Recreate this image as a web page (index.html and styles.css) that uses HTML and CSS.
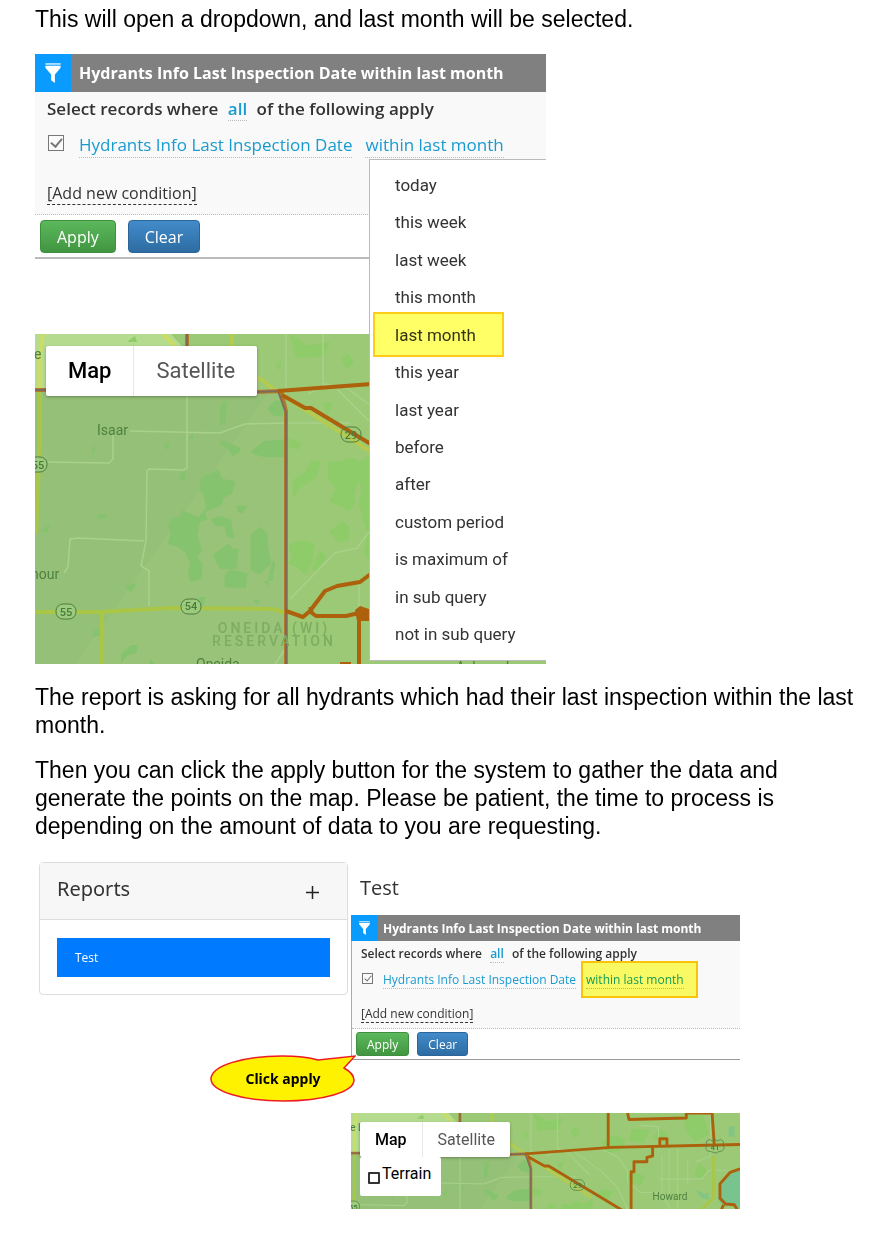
FILE: index.html
```
<!DOCTYPE html>
<html lang="en">
<head>
    <meta charset="UTF-8">
    <meta name="viewport" content="width=device-width, initial-scale=1.0">
    <title>Hydrant report guide</title>
    <link rel="stylesheet" href="styles.css">
</head>
<body>
    <!-- Shared drawings -->
    <svg class="defs" width="0" height="0" aria-hidden="true">
        <symbol id="funnel" viewBox="0 0 18 21">
            <path d="M1 0h16v2H1z" fill="#a9dcff"/>
            <path d="M1 3h16v2l-6 7v9l-4-3v-6L1 5z" fill="#fff"/>
        </symbol>
        <symbol id="map" viewBox="0 0 543 330">
            <rect width="543" height="330" fill="#9bc975"/>
            <path d="M0 0h136l25 28-60 42H0z" fill="#b5dc8e"/>
            <path d="M0 57h245l6 20v253H0z" fill="#98c379"/>
            <path d="M0 57h235L40 330H0z" fill="#95c077"/>
            <!-- woods -->
            <g fill="#86c36e" transform="translate(145 66) scale(0.3333)">
                <path d="M64 234l52-26 10 28 40 8-10 38-26 12-4 20-50 22 6 22-22 8-8 40 14 44-14 22 16 22-4 44-34 8-6-30 8-22-14-34-26-20-28-8 8-40-10-14 12-22 26-6 6-20 50 22 22-30-8-42-12-6z"/>
                <path d="M94 356l30-8 30 12 8 54-20-2-8-32-30-4-8-12zM100 464l46-34 10 14 20 4-6 60-50-2-14-22zM134 526l14-18 54 12-4 44-64-2zM212 404l28-24 22 22 2 40 10 48-36 34-26-14zM280 478l6 12-8 50-14 2 8-40zM250 544l18-2-4 16z"/>
                <path d="M120 124l14-2 46 22 2 10-24 16-12-22-26-16zM214 154l36-30 66-6v54h-62l-36-10zM170 316l32 2-14 22-16-4zM0 224l18-14-4 28-14 6zM26 116l14-20-2 24zM262 26l24-26 30 10-8 40-30-4zM122 10l20-8-6 66-16 10zM56 592l20-2-6 28-14-2zM218 600l24 2-14 10z"/>
            </g>
            <g fill="#86c36e">
                <path d="M128 112l7-5-2 9zM90 252l12-3-6 10zM63 180h8v5h-8zM6 196l10-6-4 9zM57 118l2-10 1 12zM58 296l6-2 1 7-7 2zM86 320l10-9h6v7l-10 4-6 7zM116 325l4 5h-6z"/>
            </g>
            <g fill="#8dcc68">
                <path d="M92 8l8-6 2 6zM240 32l6-6-1 10zM307 25l6-6 6 10-8 6zM288 70l10-2-6 12zM255 0l18 12 22-4-6 14-28 2z"/>
                <path transform="translate(145 66) scale(0.3333)" d="M326 114l36 14-4 20-32-6zM340 240l36-24 20-36 28 6-14 44-50 34-22 30zM446 186l40-2 20-12 30 8 2 60-16 40 4 30-18 24-60-32 20-34-24-30zM326 434l40-14 38 12-8 60-20 32-24-22-26-12 10-20zM448 396l40-32 20 18-2 38-30 6zM532 190l44-30v330l-24-30 10-60-26-90 8-40zM420 450l20 20-34 44-10-8z"/>
                <path d="M350 40l20-10 14 8-8 14-20 4zM390 82l20 6-6 14-20-8zM430 22l12 6-6 14-14-8zM485 70l12 10-10 14-8-8zM352 106l14 4-10 14-14-10zM468 0l24 4 8 26-20 10-14-18zM392 22l24 2-8 18-20-4z"/>
            </g>
            <g fill="#78c38e">
                <path d="M543 80l-15 5-13 18-3 16 7 12 14-2 10 8z"/>
                <path d="M527 20l8-3v16h-8zM480 107l14 6 4-2 2 10-10-2z" opacity="0.7"/>
            </g>
            <!-- small roads -->
            <g fill="none" stroke="#a9d18a" stroke-width="1.5">
                <path d="M152 62v72l-3 2-35-1-2 2-1 70-5 25 8 5v35M95 97l90 2 25-9 45-1h60M78 100v25l-4 4-61-1M109 207l-66-3-8 1-2 28-4 6M251 0v60M288 0v50l12 3 34 34M255 265l45-46 22-5 12-16M324 250v28M273 60l20-10M240 330l15-22"/>
                <path d="M347 50l25 11 14 20v14l18 16h26M288 50l24 4 40 30 20 20 14 30M430 55l-1-36-27-2M444 50v64h-20M456 48v86M430 92h60l10-12h30M470 66v34"/>
                <path d="M434 60v54l12 20M502 0v60l-20 8"/>
            </g>
            <!-- highways -->
            <g fill="none" stroke="#a9c647" stroke-width="4">
                <path d="M0 278h65l70-4 103 1 13 4M67 279v51"/>
                <path d="M197 0v16M221 42l25 18 90 58" stroke="#b4cb50"/>
                <path d="M8 0L5 20v37M128 0l12 12" stroke="#cbdc67"/>
                <path d="M5 57v43L1 200"/>
                <path d="M506 60v58l-12 12-14 14"/>
            </g>
            <path d="M0 56h14M221 58l25-1 5 20v253M152 0v14" fill="none" stroke="#b27a2a" stroke-width="4"/>
            <path d="M0 56h14M221 58l22-1 8 22v251M152 0v14" fill="none" stroke="#806a5c" stroke-width="2"/>
            <!-- district borders -->
            <g fill="none" stroke="#ad610c" stroke-width="4" stroke-linejoin="round">
                <path d="M243 57l120-9 180-4M247 61l23 13 6 0 58 35 50 30"/>
                <path d="M251 277l17 6 7-6 15-20 12-5 23-4 12-9M275 273l2 6 4 3h30l13-3v51"/>
                <path d="M359 0v48M386 0l2 9 80-2V0h36l3 44M421 46v14l-8 2v6h-18v14h-4v60M431 45v-9h10v9"/>
                <path d="M543 78l-14 5-14 16 0 20 8 8 12 1 7 12M520 128l-5 12 10 6"/>
            </g>
            <path d="M320 276l5-4 9 3v12h-12zM305 328h11v2h-11z" fill="#ad610c"/>
            <!-- shields -->
            <g fill="#9bcb7d" stroke="#517b3f" stroke-width="1">
                <rect x="-8" y="123" width="20" height="15" rx="7"/>
                <rect x="306" y="93" width="20" height="15" rx="7" fill="none"/>
                <rect x="21" y="270" width="20" height="15" rx="7"/>
                <rect x="146" y="265" width="20" height="15" rx="7"/>
                <path d="M496 40l4-3 5 2 3-2 3 2 5-2 4 3-1 5q4 4-1 8-6 1-9 3-5-2-11-3-5-3-1-8z" fill="none"/>
            </g>
            <g class="map-number">
                <text x="3" y="135">55</text>
                <text x="316" y="105">29</text>
                <text x="31" y="282">55</text>
                <text x="156" y="276">54</text>
                <text x="508" y="51">41</text>
            </g>
            <g class="map-town">
                <text x="-1" y="25">e L</text>
                <text x="62" y="101">Isaar</text>
                <text x="-4" y="245">nour</text>
                <text x="161" y="335">Oneida</text>
                <text x="421" y="122">Howard</text>
                <text x="421" y="338">Ashwaubenon</text>
            </g>
            <g class="map-region">
                <text x="239" y="299">ONEIDA (WI)</text>
                <text x="239" y="312">RESERVATION</text>
            </g>
        </symbol>
    </svg>

    <main class="page">
        <p>This will open a dropdown, and last month will be selected.</p>

        <section class="screen">
            <div class="filter">
                <div class="filter-header">
                    <span class="filter-icon"><svg><use href="#funnel"/></svg></span>
                    <h2>Hydrants Info Last Inspection Date within last month</h2>
                </div>
                <div class="filter-body">
                    <div class="filter-rule">Select records where <a href="#" class="term">all</a> of the following apply</div>
                    <div class="condition">
                        <input type="checkbox" aria-label="Use condition" checked>
                        <a href="#" class="term">Hydrants Info Last Inspection Date</a>
                        <a href="#" class="term">within last month</a>
                    </div>
                    <div class="filter-add"><a href="#">[Add new condition]</a></div>
                </div>
                <div class="filter-actions">
                    <button class="btn btn-apply">Apply</button>
                    <button class="btn btn-clear">Clear</button>
                </div>
            </div>
            <div class="map">
                <svg class="map-art" viewBox="0 0 543 330" preserveAspectRatio="xMinYMin slice"><use href="#map"/></svg>
                <div class="map-types">
                    <button class="active">Map</button>
                    <button>Satellite</button>
                </div>
            </div>
            <ul class="menu">
                <li><button>today</button></li>
                <li><button>this week</button></li>
                <li><button>last week</button></li>
                <li><button>this month</button></li>
                <li class="marked"><button>last month</button></li>
                <li><button>this year</button></li>
                <li><button>last year</button></li>
                <li><button>before</button></li>
                <li><button>after</button></li>
                <li><button>custom period</button></li>
                <li><button>is maximum of</button></li>
                <li><button>in sub query</button></li>
                <li><button>not in sub query</button></li>
            </ul>
        </section>

        <p>The report is asking for all hydrants which had their last inspection within the last month.</p>
        <p>Then you can click the apply button for the system to gather the data and generate the points on the map. Please be patient, the time to process is depending on the amount of data to you are requesting.</p>

        <section class="workspace">
            <aside class="reports">
                <header>
                    <h2>Reports</h2>
                    <button class="add" aria-label="Add report">
                        <svg width="13" height="13" viewBox="0 0 13 13"><path d="M0 6.5h13M6.5 0v13" stroke="#222" stroke-width="1.5"/></svg>
                    </button>
                </header>
                <div class="report-list">
                    <a href="#">Test</a>
                </div>
            </aside>
            <div class="report">
                <h2 class="report-title">Test</h2>
                <div class="filter filter-small">
                    <div class="filter-header">
                        <span class="filter-icon"><svg><use href="#funnel"/></svg></span>
                        <h2>Hydrants Info Last Inspection Date within last month</h2>
                    </div>
                    <div class="filter-body">
                        <div class="filter-rule">Select records where <a href="#" class="term">all</a> of the following apply</div>
                        <div class="condition">
                            <input type="checkbox" aria-label="Use condition" checked>
                            <a href="#" class="term">Hydrants Info Last Inspection Date</a>
                            <span class="marked"><a href="#" class="term">within last month</a></span>
                        </div>
                        <div class="filter-add"><a href="#">[Add new condition]</a></div>
                    </div>
                    <div class="filter-actions">
                        <button class="btn btn-apply">Apply</button>
                        <button class="btn btn-clear">Clear</button>
                    </div>
                </div>
                <div class="map map-small">
                    <svg class="map-art" viewBox="0 0 543 134" preserveAspectRatio="xMinYMin slice"><svg width="543" height="330"><use href="#map"/></svg></svg>
                    <div class="map-types">
                        <button class="active">Map</button>
                        <button>Satellite</button>
                    </div>
                    <label class="terrain"><input type="checkbox">Terrain</label>
                </div>
                <div class="callout">
                    <svg width="146" height="48" viewBox="0 0 146 48">
                        <path d="M108 5L145 1L134 13C141 17 144 20 144 25C144 37 113 46 73 46C32 46 1 36 1 24C1 11 32 1 72 1C86 1 98 2 108 5Z" fill="#fff200" stroke="#ed1c24" stroke-width="1.5"/>
                    </svg>
                    <span>Click apply</span>
                </div>
            </div>
        </section>
    </main>
</body>
</html>
```
FILE: styles.css
```
* {
    box-sizing: border-box;
}

body {
    margin: 0;
    background: #fff;
    color: #000;
    font-family: "Liberation Sans", Arial, sans-serif;
}

h2, p, ul {
    margin: 0;
    padding: 0;
}

a {
    color: inherit;
    text-decoration: none;
}

button {
    font: inherit;
    border: 0;
    background: none;
    padding: 0;
    cursor: pointer;
}

.defs {
    position: absolute;
}

.page {
    padding: 5px 35px 36px;
    font-size: 23px;
    line-height: 28px;
}

.page > p + p {
    margin-top: 17px;
}

/* Filter panel */
.screen {
    position: relative;
    max-width: 511px;
    margin: 21px 0 19px;
    overflow: hidden;
}

.filter {
    font-family: "Open Sans", "Noto Sans", sans-serif;
    font-size: 17px;
    line-height: 24px;
    color: #333;
    border-bottom: 2px solid #bbb;
}

.filter-header {
    display: flex;
    align-items: center;
    height: 38px;
    background: #808080;
    color: #fff;
    white-space: nowrap;
}

.filter-header h2 {
    margin-left: 8px;
    font-size: 16px;
    font-weight: 700;
}

.filter-icon {
    display: flex;
    align-items: center;
    justify-content: center;
    width: 36px;
    height: 100%;
    background: #0a9bff;
}

.filter-icon svg {
    width: 18px;
    height: 20px;
}

.filter-body {
    padding: 5px 12px 9px;
    background: #f9f9f9;
    border-bottom: 1px dotted #bbb;
    white-space: nowrap;
}

.filter-rule {
    font-weight: 600;
}

.term {
    color: #189bd1;
    border-bottom: 1px dotted #bbb;
}

.filter-rule .term {
    margin: 0 5px;
}

.condition {
    display: flex;
    align-items: center;
    gap: 13px;
    height: 24px;
    margin: 12px 0 24px;
}

.condition input {
    appearance: none;
    flex: none;
    width: 16px;
    height: 16px;
    margin: 0 2px 4px 1px;
    border: 1px solid #777;
    background: #fafafa;
    display: grid;
    place-items: center;
}

.condition input:checked::before {
    content: "";
    width: 5px;
    height: 9px;
    margin-bottom: 3px;
    border: solid #777;
    border-width: 0 2px 2px 0;
    transform: rotate(40deg);
}

.filter-add {
    font-size: 16px;
    font-weight: 500;
}

.filter-add a {
    border-bottom: 1px dashed #333;
}

.filter-actions {
    display: flex;
    gap: 12px;
    padding: 5px 5px 4px;
    font-size: 16px;
}

.btn {
    height: 33px;
    padding: 0 16px;
    border: 1px solid;
    border-radius: 4px;
    color: #fff;
}

.btn-apply {
    background: linear-gradient(#5cb85c, #419641);
    border-color: #3e8f3e;
}

.btn-clear {
    background: linear-gradient(#428bca, #2d6ca2);
    border-color: #2b669a;
}

/* Map */
.map {
    position: relative;
    height: 330px;
    margin-top: 75px;
    padding: 12px 11px;
    overflow: hidden;
    font-family: Roboto, sans-serif;
}

.map-art {
    position: absolute;
    top: 0;
    left: 0;
    width: auto;
    height: 100%;
}

.map-number {
    font: 500 11px Roboto, sans-serif;
    fill: #4a7a3a;
    text-anchor: middle;
}

.map-town {
    font: 14px Roboto, sans-serif;
    fill: #4f8040;
}

.map-region {
    font: 500 14px Roboto, sans-serif;
    letter-spacing: 3px;
    fill: #7eac61;
    text-anchor: middle;
}

.map-types {
    position: relative;
    display: flex;
    width: max-content;
    background: #fff;
    border-radius: 2px;
    box-shadow: 0 1px 3px rgba(0, 0, 0, 0.3);
}

.map-types button {
    height: 50px;
    padding: 0 22px;
    font-size: 22px;
    color: #565656;
}

.map-types .active {
    color: #000;
    font-weight: 500;
    border-right: 1px solid #e6e6e6;
}

/* Dropdown */
.menu {
    position: absolute;
    top: 105px;
    right: -1px;
    bottom: 3px;
    width: 178px;
    display: flex;
    flex-direction: column;
    padding: 6px 0 7px;
    list-style: none;
    background: #fff;
    border: 1px solid #bbb;
    font-family: Roboto, sans-serif;
    font-size: 17px;
}

.menu li {
    position: relative;
    flex: 1;
    display: flex;
}

.menu button {
    flex: 1;
    padding-left: 25px;
    text-align: left;
    color: #333;
}

.marked {
    position: relative;
}

.marked::after {
    content: "";
    position: absolute;
    inset: -4px 42px -4px 3px;
    border: 2px solid #ffcc1a;
    background: #ffff66;
    mix-blend-mode: multiply;
    pointer-events: none;
}

/* Reports workspace */
.workspace {
    display: grid;
    grid-template-columns: 309fr 389fr;
    align-items: start;
    gap: 3px;
    max-width: 705px;
    margin-top: 22px;
    padding-left: 4px;
}

.reports {
    border: 1px solid #ddd;
    border-radius: 4px;
    color: #333;
}

.reports header {
    display: flex;
    align-items: center;
    justify-content: space-between;
    height: 57px;
    padding: 0 28px 4px 17px;
    background: #f7f7f7;
    border-bottom: 1px solid #ddd;
}

.reports h2 {
    font: 400 20px/28px "Noto Sans", sans-serif;
}

.add {
    display: flex;
    margin-top: 6px;
}

.report-list {
    padding: 18px 17px 17px;
}

.report-list a {
    display: block;
    padding-left: 18px;
    background: #007bff;
    color: #fff;
    font: 12px/39px "Open Sans", sans-serif;
}

.report {
    position: relative;
    min-width: 0;
}

.report-title {
    padding: 12px 9px 13px;
    font: 400 20px/28px "Open Sans", sans-serif;
    color: #333;
}

.filter-small {
    font-size: 12px;
    line-height: 17px;
    border-left: 1px solid #aaa;
    border-bottom: 1px solid #999;
}

.filter-small .filter-header {
    height: 26px;
    margin-left: -1px;
}

.filter-small .filter-header h2 {
    margin-left: 5px;
    font-size: 12px;
}

.filter-small .filter-icon {
    width: 27px;
}

.filter-small .filter-icon svg {
    width: 13px;
    height: 14px;
}

.filter-small .filter-body {
    padding: 4px 9px 6px;
}

.filter-small .condition {
    gap: 10px;
    height: 17px;
    margin: 9px 0 17px;
}

.filter-small .condition input {
    width: 11px;
    height: 11px;
    margin: 0 0 3px 1px;
}

.filter-small .condition input:checked::before {
    width: 3px;
    height: 6px;
    margin-bottom: 2px;
    border-width: 0 1px 1px 0;
}

.filter-small .marked::after {
    inset: -10px -14px -10px -5px;
    border-color: #ffc80a;
}

.filter-small .filter-add,
.filter-small .filter-actions {
    font-size: 12px;
}

.filter-small .filter-actions {
    gap: 8px;
    padding: 3px 4px;
}

.filter-small .btn {
    height: 24px;
    padding: 0 10px;
    border-radius: 3px;
}

.map-small {
    height: 96px;
    margin-top: 53px;
    padding: 9px;
}

.map-small .map-types button {
    height: 35px;
    padding: 0 15px;
    font-size: 16px;
}

.terrain {
    position: relative;
    display: flex;
    align-items: center;
    gap: 2px;
    width: 81px;
    height: 39px;
    padding: 0 8px 6px;
    background: #fff;
    border-radius: 2px;
    font-size: 16px;
}

.terrain input {
    appearance: none;
    flex: none;
    width: 12px;
    height: 12px;
    margin: 9px 0 0;
    border: 2px solid #333;
    border-radius: 1px;
}

/* Balloon pointing at the small Apply button */
.callout {
    position: absolute;
    top: 193px;
    left: -141px;
    display: grid;
    place-items: center;
    font: 700 14px/20px "Noto Sans", sans-serif;
}

.callout svg,
.callout span {
    grid-area: 1 / 1;
}
```
